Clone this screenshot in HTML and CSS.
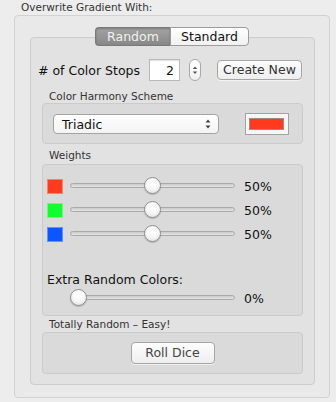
FILE: index.html
```html
<!DOCTYPE html>
<html>
<head>
<meta charset="utf-8">
<link rel="stylesheet" href="styles.css">
</head>
<body>
<div class="header">Overwrite Gradient With:</div>
<div class="outer">
  <div class="tabs">
    <div class="tab tab-on">Random</div>
    <div class="tab tab-off">Standard</div>
  </div>
  <div class="tabbox">
    <div class="row1">
      <div class="lbl-stops">#&nbsp;of Color Stops</div>
      <div class="numfield">2</div>
      <div class="stepper">
        <svg width="12" height="22" viewBox="0 0 12 22"><path d="M6 7.5 L8.2 10 L3.8 10 Z" fill="#555"/><path d="M6 15 L8.2 12.5 L3.8 12.5 Z" fill="#555"/></svg>
      </div>
      <div class="btn btn-create">Create New</div>
    </div>
    <div class="grouplabel gl-harmony">Color Harmony Scheme</div>
    <div class="group g-harmony">
      <div class="select">
        <span class="select-text">Triadic</span>
        <svg class="select-arrows" width="8" height="12" viewBox="0 0 8 12"><path d="M4 1.5 L6.5 4.5 L1.5 4.5 Z" fill="#444"/><path d="M4 10.5 L6.5 7.5 L1.5 7.5 Z" fill="#444"/></svg>
      </div>
      <div class="well"><div class="well-color"></div></div>
    </div>
    <div class="grouplabel gl-weights">Weights</div>
    <div class="group g-weights">
      <div class="wrow">
        <div class="swatch sw-red"></div>
        <div class="slider"><div class="track"></div><div class="knob" style="left:74px"></div></div>
        <div class="pct">50%</div>
      </div>
      <div class="wrow">
        <div class="swatch sw-green"></div>
        <div class="slider"><div class="track"></div><div class="knob" style="left:74px"></div></div>
        <div class="pct">50%</div>
      </div>
      <div class="wrow">
        <div class="swatch sw-blue"></div>
        <div class="slider"><div class="track"></div><div class="knob" style="left:74px"></div></div>
        <div class="pct">50%</div>
      </div>
      <div class="extra-label">Extra Random Colors:</div>
      <div class="erow">
        <div class="slider"><div class="track"></div><div class="knob" style="left:0px"></div></div>
        <div class="pct">0%</div>
      </div>
    </div>
    <div class="grouplabel gl-random">Totally Random – Easy!</div>
    <div class="group g-roll">
      <div class="btn btn-roll">Roll Dice</div>
    </div>
  </div>
</div>
</body>
</html>
```

FILE: styles.css
```css
html, body {
  margin: 0;
  padding: 0;
}
body {
  width: 336px;
  height: 402px;
  background: #ededed;
  font-family: "DejaVu Sans", "Liberation Sans", sans-serif;
  color: #111;
  overflow: hidden;
}
.header {
  margin-left: 21px;
  height: 15px;
  line-height: 15px;
  font-size: 10.5px;
  color: #333;
}
.outer {
  margin-left: 14px;
  width: 316px;
  box-sizing: border-box;
  border: 1px solid #d2d2d2;
  border-radius: 4px;
  background: #e9e9e9;
  padding: 11px 14px 12px 15px;
}
.tabs {
  position: relative;
  z-index: 1;
  display: flex;
  justify-content: center;
  margin-bottom: -9px;
  padding-right: 1px;
}
.tab {
  height: 19px;
  box-sizing: border-box;
  font-size: 12.5px;
  line-height: 17px;
  text-align: center;
}
.tab-on {
  width: 75px;
  border: 1px solid #7a7a7a;
  border-right: none;
  border-radius: 4px 0 0 4px;
  background: linear-gradient(#a3a3a3, #888888);
  color: #f2f2f2;
  box-shadow: inset 0 1px 2px rgba(0,0,0,0.25);
}
.tab-off {
  width: 79px;
  border: 1px solid #9c9c9c;
  border-radius: 0 4px 4px 0;
  background: linear-gradient(#ffffff, #f1f1f1);
  color: #111;
}
.tabbox {
  border: 1px solid #cdcdcd;
  border-radius: 4px;
  background: #e2e2e2;
  padding: 21px 11px 10px 11px;
}
.row1 {
  display: flex;
  align-items: center;
  height: 22px;
  margin-left: -4px;
}
.lbl-stops {
  width: 111px;
  font-size: 12.5px;
  white-space: nowrap;
}
.numfield {
  width: 31px;
  height: 22px;
  box-sizing: border-box;
  border: 1px solid #b9b9b9;
  background: #fff;
  box-shadow: inset 0 1px 1px rgba(0,0,0,0.12);
  text-align: right;
  padding-right: 5px;
  font-size: 12.5px;
  line-height: 21px;
}
.stepper {
  margin-left: 9px;
  width: 12px;
  height: 22px;
  box-sizing: border-box;
  border: 1px solid #a9a9a9;
  border-radius: 6px;
  background: linear-gradient(#ffffff, #f0f0f0);
  display: flex;
  align-items: center;
  justify-content: center;
  overflow: hidden;
}
.stepper svg {
  display: block;
  flex: none;
}
.btn {
  box-sizing: border-box;
  border: 1px solid #a6a6a6;
  border-radius: 4px;
  background: linear-gradient(#fdfdfd, #eeeeee);
  box-shadow: 0 1px 0 rgba(255,255,255,0.6);
  font-size: 12.5px;
  text-align: center;
  color: #333;
}
.btn-create {
  margin-left: 16px;
  width: 85px;
  height: 20px;
  line-height: 18px;
}
.grouplabel {
  margin-left: 7px;
  font-size: 10.5px;
  line-height: 13px;
  color: #333;
  white-space: nowrap;
}
.gl-harmony {
  height: 13px;
  padding-top: 9px;
}
.gl-weights {
  height: 13px;
  padding-top: 5px;
  margin-bottom: 2px;
}
.gl-random {
  height: 13px;
  padding-top: 2px;
  margin-bottom: 1px;
}
.group {
  border: 1px solid #cbcbcb;
  border-radius: 4px;
  background: #dadada;
}
.g-harmony {
  display: flex;
  align-items: center;
  padding: 9px 0 8px 10px;
  height: 22px;
}
.select {
  width: 166px;
  height: 20px;
  box-sizing: border-box;
  border: 1px solid #a4a4a4;
  border-radius: 4px;
  background: linear-gradient(#ffffff, #f3f3f3);
  display: flex;
  align-items: center;
  justify-content: space-between;
  padding: 0 6px 0 8px;
}
.select-text {
  font-size: 12.5px;
  color: #111;
}
.select-arrows {
  display: block;
}
.well {
  margin-left: 26px;
  width: 44px;
  height: 22px;
  box-sizing: border-box;
  border: 1px solid #a2a2a2;
  background: #f7f7f7;
  padding: 4px 4px 4px 3px;
}
.well-color {
  width: 35px;
  height: 12px;
  box-sizing: border-box;
  border: 1px solid #a08a86;
  background: #ff3a1e;
}
.g-weights {
  padding: 9px 0 7px 4px;
}
.wrow {
  display: flex;
  align-items: center;
  height: 24px;
}
.swatch {
  width: 16px;
  height: 15px;
  box-sizing: border-box;
  border: 1px solid rgba(255,255,255,0.35);
}
.sw-red { background: #fd3b20; }
.sw-green { background: #12fd30; }
.sw-blue { background: #0b56ff; }
.slider {
  position: relative;
  margin-left: 7px;
  width: 165px;
  height: 18px;
}
.track {
  position: absolute;
  left: 0;
  right: 0;
  top: 6px;
  height: 5px;
  box-sizing: border-box;
  border: 1px solid #a9a9a9;
  border-radius: 3px;
  background: linear-gradient(#c9c9c9, #e6e6e6);
}
.knob {
  position: absolute;
  top: 0;
  width: 17px;
  height: 17px;
  box-sizing: border-box;
  border: 1px solid #8f8f8f;
  border-radius: 50%;
  background: radial-gradient(circle at 50% 35%, #ffffff 0%, #f6f6f6 50%, #d8d8d8 100%);
  box-shadow: 0 1px 1px rgba(0,0,0,0.2);
}
.pct {
  margin-left: 9px;
  font-size: 12.5px;
  color: #111;
}
.extra-label {
  margin-top: 26px;
  height: 16px;
  line-height: 16px;
  font-size: 12.5px;
  color: #111;
}
.erow {
  display: flex;
  align-items: center;
  height: 20px;
  padding-left: 16px;
}
.g-roll {
  display: flex;
  justify-content: center;
  padding: 9px 0 9px 0;
}
.btn-roll {
  width: 84px;
  height: 22px;
  line-height: 20px;
  color: #444;
}
```
